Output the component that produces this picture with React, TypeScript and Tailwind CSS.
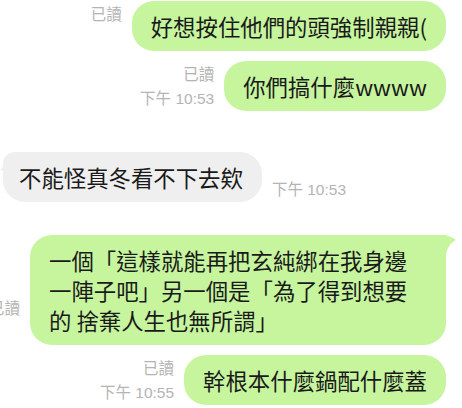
import React from "react";

type MetaProps = {
    read?: boolean;
    time?: string;
};

const Meta = ({ read, time }: MetaProps) => {
    return (
        <div
            className="flex shrink-0 flex-col items-end whitespace-nowrap text-[15.5px] leading-6 text-[#b4b4b4]"
            style={{ fontFamily: '"Liberation Sans", "Noto Sans CJK TC", sans-serif' }}
        >
            {read && <span>已讀</span>}
            <span>{time ?? "\u00a0"}</span>
        </div>
    );
};

const GreenTail = () => (
    <svg
        className="absolute -right-[10px] top-0"
        width="22"
        height="22"
        viewBox="0 0 22 22"
    >
        <path
            d="M0 0 H8 C14 0 18 2 22 5 C16 8 12 14 12 22 H0 Z"
            fill="#c6f59e"
        />
    </svg>
);

const GrayTail = () => (
    <svg
        className="absolute -left-[3px] top-[6px]"
        width="10"
        height="18"
        viewBox="0 0 10 18"
    >
        <path d="M10 0 L10 18 C7 15 4 13 0 12 C3 10 5 6 5 0 Z" fill="#efefef" />
    </svg>
);

const App = () => {
    const bubble =
        "shrink-0 rounded-[22px] px-[19px] py-[10px] text-[22.4px] leading-[30px] text-[#1a1a1a] whitespace-nowrap";

    return (
        <div
            className="flex h-[408px] w-[462px] flex-col overflow-hidden bg-white pt-px"
            style={{ fontFamily: '"Noto Sans CJK TC", "Liberation Sans", sans-serif' }}
        >
            <div className="flex items-end justify-end gap-[10px] pr-4">
                <Meta read />
                <div className={`${bubble} bg-[#c6f59e]`}>好想按住他們的頭強制親親(</div>
            </div>

            <div className="mt-[10px] flex items-end justify-end gap-[10px] pr-4">
                <Meta read time="下午 10:53" />
                <div className={`${bubble} bg-[#c6f59e]`}>你們搞什麼wwww</div>
            </div>

            <div className="mt-[41px] flex items-end gap-[10px] pl-[3px]">
                <div className={`${bubble} relative rounded-tl-[12px] bg-[#efefef] pl-4`}>
                    <GrayTail />
                    不能怪真冬看不下去欸
                </div>
                <Meta time="下午 10:53" />
            </div>

            <div className="mt-[33px] flex items-end justify-end gap-[10px] pr-4">
                <Meta read />
                <div className={`${bubble} relative w-[416px] rounded-tr-none bg-[#c6f59e]`}>
                    <GreenTail />
                    一個「這樣就能再把玄純綁在我身邊
                    <br />
                    一陣子吧」另一個是「為了得到想要
                    <br />
                    的 捨棄人生也無所謂」
                </div>
            </div>

            <div className="mt-[10px] flex items-end justify-end gap-[10px] pr-4">
                <Meta read time="下午 10:55" />
                <div className={`${bubble} bg-[#c6f59e]`}>幹根本什麼鍋配什麼蓋</div>
            </div>
        </div>
    );
};

export default App;
